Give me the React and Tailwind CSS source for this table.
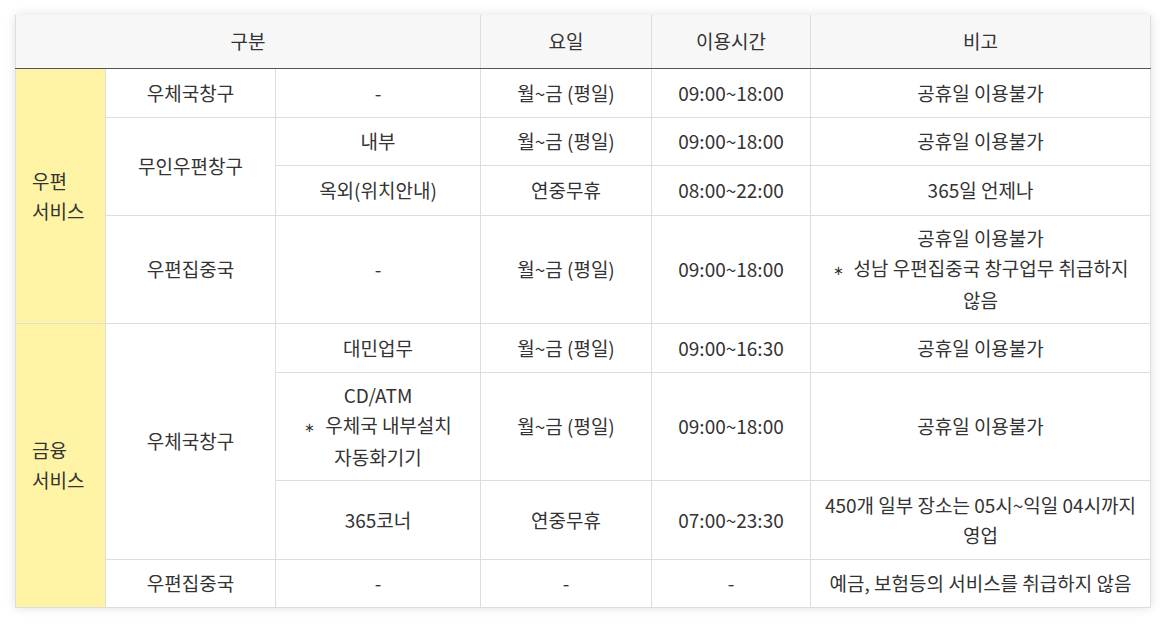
import React from 'react';

// 우체국 서비스 이용시간 표
const Star = () => <span className="text-[13px] align-[1px] mr-[10px]">∗</span>;

const rows = [
  { h: 'h-[49px]', group: ['우편', '서비스'], groupSpan: 4, name: '우체국창구', nameSpan: 1, sub: '-', day: '월~금 (평일)', time: '09:00~18:00', note: ['공휴일 이용불가'] },
  { h: 'h-[48px]', name: '무인우편창구', nameSpan: 2, sub: '내부', day: '월~금 (평일)', time: '09:00~18:00', note: ['공휴일 이용불가'] },
  { h: 'h-[50px]', sub: '옥외(위치안내)', day: '연중무휴', time: '08:00~22:00', note: ['365일 언제나'] },
  { h: 'h-[108px]', name: '우편집중국', nameSpan: 1, sub: '-', day: '월~금 (평일)', time: '09:00~18:00', note: ['공휴일 이용불가', <><Star />성남 우편집중국 창구업무 취급하지</>, '않음'] },
  { h: 'h-[49px]', group: ['금융', '서비스'], groupSpan: 4, name: '우체국창구', nameSpan: 3, sub: '대민업무', day: '월~금 (평일)', time: '09:00~16:30', note: ['공휴일 이용불가'] },
  { h: 'h-[108px]', sub: ['CD/ATM', <><Star />우체국 내부설치</>, '자동화기기'], day: '월~금 (평일)', time: '09:00~18:00', note: ['공휴일 이용불가'] },
  { h: 'h-[79px]', sub: '365코너', day: '연중무휴', time: '07:00~23:30', note: ['450개 일부 장소는 05시~익일 04시까지', '영업'] },
  { h: 'h-[48px]', name: '우편집중국', nameSpan: 1, sub: '-', day: '-', time: '-', note: ['예금, 보험등의 서비스를 취급하지 않음'] },
];

const Lines = ({ value }) => {
  const list = Array.isArray(value) ? value : [value];
  return list.map((t, i) => (
    <div key={i} className="whitespace-pre">{t}</div>
  ));
};

const cell = 'border border-[#dddddd] px-2 py-0 text-center align-middle';

export default function App() {
  return (
    <div className="bg-white min-h-[629px] pt-[15px] px-[15px]" style={{ fontFamily: '"Noto Sans CJK KR", "Noto Sans", sans-serif' }}>
      <div className="w-[1136px] shadow-[0_0_10px_rgba(0,0,0,0.12)]">
        <table className="w-full border-collapse table-fixed text-[19px] leading-[30px] text-[#333333]">
          <colgroup>
            <col className="w-[90px]" />
            <col className="w-[170px]" />
            <col className="w-[205px]" />
            <col className="w-[171px]" />
            <col className="w-[159px]" />
            <col />
          </colgroup>
          <thead>
            <tr className="bg-[#f7f7f7] h-[53px]">
              <th colSpan={3} className="border-x border-[#dddddd] border-b border-b-[#555555] font-normal">구분</th>
              <th className="border-x border-[#dddddd] border-b border-b-[#555555] font-normal">요일</th>
              <th className="border-x border-[#dddddd] border-b border-b-[#555555] font-normal">이용시간</th>
              <th className="border-x border-[#dddddd] border-b border-b-[#555555] font-normal">비고</th>
            </tr>
          </thead>
          <tbody>
            {rows.map((r, i) => (
              <tr key={i} className={`${r.h} ${i === rows.length - 1 ? 'border-b border-b-[#555555]' : ''}`}>
                {r.group && (
                  <td rowSpan={r.groupSpan} className="border border-[#dddddd] bg-[#fff3a5] pl-4 text-left align-middle">
                    <Lines value={r.group} />
                  </td>
                )}
                {r.name && (
                  <td rowSpan={r.nameSpan} className={cell}>{r.name}</td>
                )}
                <td className={cell}><Lines value={r.sub} /></td>
                <td className={cell}>{r.day}</td>
                <td className={cell}>{r.time}</td>
                <td className={cell}><Lines value={r.note} /></td>
              </tr>
            ))}
          </tbody>
        </table>
      </div>
    </div>
  );
}
